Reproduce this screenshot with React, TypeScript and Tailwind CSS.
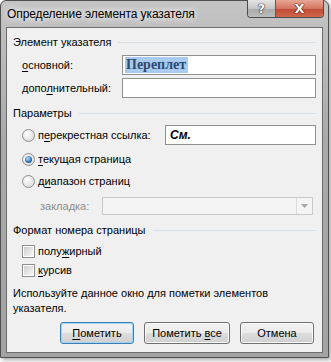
import type { ReactNode } from "react";

const U = ({ children }: { children: ReactNode }) => (
  <span className="underline decoration-1 underline-offset-[2px]">{children}</span>
);

const Radio = ({ checked }: { checked?: boolean }) => (
  <span className="flex h-[13px] w-[13px] shrink-0 items-center justify-center rounded-full border border-[#8e8e8e] bg-[radial-gradient(circle_at_40%_35%,#ffffff,#d2d2d2)]">
    {checked && (
      <span className="h-[7px] w-[7px] rounded-full bg-[radial-gradient(circle_at_40%_35%,#b4e2ff,#1a5fae_70%)]" />
    )}
  </span>
);

const Check = () => (
  <span className="flex h-[13px] w-[13px] shrink-0 items-center justify-center border border-[#8e8f8f] bg-white">
    <span className="h-[9px] w-[9px] bg-[linear-gradient(135deg,#d0d0d0,#f6f6f6)]" />
  </span>
);

const Group = ({ label }: { label: string }) => (
  <div className="flex h-[15px] items-center gap-[7px] pl-[6px] pr-[6px]">
    <span className="whitespace-nowrap leading-[15px] text-black">{label}</span>
    <span className="h-px flex-1 bg-[#d5dfe5]" />
  </div>
);

const Btn = ({ children, primary, w }: { children: ReactNode; primary?: boolean; w: string }) => (
  <button
    className={`flex h-[22px] ${w} items-center justify-center rounded-[3px] border bg-[linear-gradient(#f2f2f2_0%,#ebebeb_50%,#dddddd_51%,#cfcfcf_100%)] leading-none text-black ${
      primary
        ? "border-[#3c7fb1] shadow-[inset_0_0_0_1px_#9fd3f7]"
        : "border-[#707070] shadow-[inset_0_0_0_1px_#fbfbfb]"
    }`}
  >
    <span className="whitespace-pre">{children}</span>
  </button>
);

export default function App() {
  return (
    <div className="h-[362px] w-[331px] overflow-hidden bg-white font-['Liberation_Sans',Arial,sans-serif] text-[11px] text-black">
      <div className="flex h-[358px] w-[329px] flex-col rounded-t-[6px] border border-[#4f4f4f] bg-[linear-gradient(#c4c4c4,#a9a9a9_40%,#a3a3a3)] shadow-[2px_2px_4px_rgba(0,0,0,0.35)]">
        {/* title bar */}
        <div className="-mt-px flex h-[27px] shrink-0 items-start">
          <span className="ml-[6px] mt-[6px] whitespace-nowrap text-[12px] leading-[16px] tracking-[-0.1px] text-black [text-shadow:0_0_6px_#ffffff,0_0_10px_#ffffff]">
            Определение элемента указателя
          </span>
          <div className="ml-auto mr-[4px] flex h-[18px] overflow-hidden rounded-b-[4px] border border-t-0 border-[#4d4d4d]">
            <span className="flex w-[28px] items-center justify-center border-r border-[#5a5a5a] bg-[linear-gradient(#e4e4e4,#c6c6c6_50%,#a9a9a9_51%,#bdbdbd)] font-['DejaVu_Sans',sans-serif] text-[13px] font-bold leading-none text-white [text-shadow:0_0_1px_#222,0_0_1px_#222,0_0_1px_#222]">
              ?
            </span>
            <span className="flex w-[47px] items-center justify-center bg-[linear-gradient(#e9a694,#d27560_50%,#c14a34_51%,#d0654c)] font-['DejaVu_Sans',sans-serif] text-[13px] font-bold leading-none text-white [text-shadow:0_0_1px_#3a0a00,0_0_1px_#3a0a00,0_0_1px_#3a0a00]">
              X
            </span>
          </div>
        </div>

        {/* client area */}
        <div className="ml-[5px] flex h-[326px] w-[317px] flex-col whitespace-nowrap border border-[#6c6c6c] bg-[#f0f0f0]">
          <div className="mt-[7px]">
            <Group label="Элемент указателя" />
          </div>

          <div className="mt-[5px] flex h-[20px] items-center pl-[15px] pr-[6px]">
            <span className="w-[100px]">
              <U>о</U>сновной:
            </span>
            <div className="flex h-[20px] w-[194px] items-center border border-[#8f9092] bg-white pl-[2px]">
              <span className="bg-[#a8cbef] pl-[1px] pr-[2px] font-['Liberation_Serif',serif] text-[14px] font-bold leading-[16px] text-[#30496b]">
                Переплет
              </span>
            </div>
          </div>

          <div className="mt-[3px] flex h-[20px] items-center pl-[15px] pr-[6px]">
            <span className="w-[100px]">
              допо<U>л</U>нительный:
            </span>
            <div className="h-[20px] w-[194px] border border-[#8f9092] bg-white" />
          </div>

          <div className="mt-[8px]">
            <Group label="Параметры" />
          </div>

          <div className="mt-[4px] flex h-[20px] items-center pl-[15px] pr-[6px]">
            <Radio />
            <span className="ml-[3px]">
              п<U>е</U>рекрестная ссылка:
            </span>
            <div className="ml-auto flex h-[20px] w-[151px] items-center border border-[#8f9092] bg-white pl-[4px]">
              <span className="text-[12px] font-bold italic">См.</span>
            </div>
          </div>

          <div className="mt-[6px] flex h-[16px] items-center pl-[15px]">
            <Radio checked />
            <span className="ml-[3px]">
              <U>т</U>екущая страница
            </span>
          </div>

          <div className="mt-[6px] flex h-[16px] items-center pl-[15px]">
            <Radio />
            <span className="ml-[3px]">
              д<U>и</U>апазон страниц
            </span>
          </div>

          <div className="mt-[8px] flex h-[18px] items-center pl-[33px]">
            <span className="w-[62px] text-[#8d8d8d]">закладка:</span>
            <div className="flex h-[18px] w-[211px] items-stretch border border-[#c9c9c9] bg-[#f4f4f4]">
              <span className="flex-1" />
              <span className="flex w-[16px] items-center justify-center border-l border-[#dadada]">
                <svg width="7" height="4" viewBox="0 0 7 4">
                  <path d="M0 0h7L3.5 4z" fill="#a8a8a8" />
                </svg>
              </span>
            </div>
          </div>

          <div className="mt-[8px]">
            <Group label="Формат номера страницы" />
          </div>

          <div className="mt-[5px] flex h-[16px] items-center pl-[15px]">
            <Check />
            <span className="ml-[3px]">
              полу<U>ж</U>ирный
            </span>
          </div>

          <div className="mt-[3px] flex h-[16px] items-center pl-[15px]">
            <Check />
            <span className="ml-[3px]">
              <U>к</U>урсив
            </span>
          </div>

          <p className="mt-[8px] pl-[6px] leading-[15px]">
            Используйте данное окно для пометки элементов
            <br />
            указателя.
          </p>

          <div className="mt-[6px] flex justify-end gap-[10px] pr-[8px]">
            <Btn primary w="w-[74px]">
              <U>П</U>ометить
            </Btn>
            <Btn w="w-[86px]">
              Пометить <U>в</U>се
            </Btn>
            <Btn w="w-[74px]">Отмена</Btn>
          </div>
        </div>
      </div>
    </div>
  );
}
